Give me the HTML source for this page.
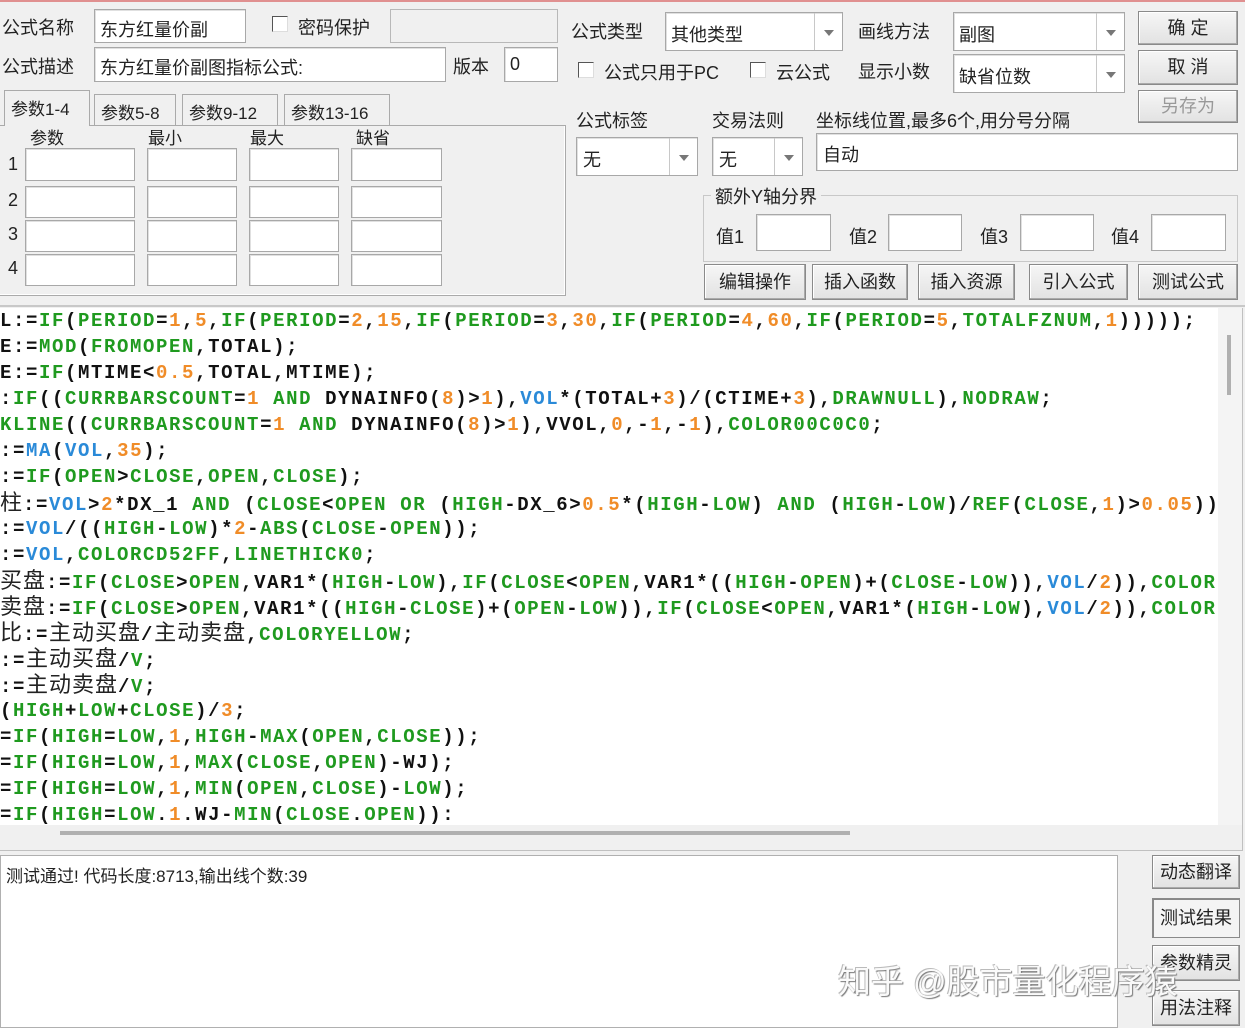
<!DOCTYPE html>
<html><head><meta charset="utf-8"><style>
*{margin:0;padding:0;box-sizing:border-box}
body{width:1245px;height:1028px;background:#f0f0f0;position:relative;overflow:hidden;font-family:"Liberation Sans","Noto Sans CJK SC",sans-serif;font-size:18px;color:#222}
.a{position:absolute;white-space:nowrap}
.in{position:absolute;background:#fff;border:1px solid #a8a8a8;box-shadow:inset 1px 1px 0 #e0e0e0}
.cb{position:absolute;width:16px;height:16px;background:#fff;border:1px solid #555;border-right-color:#ddd;border-bottom-color:#ddd}
.btn{position:absolute;background:linear-gradient(#f6f6f6,#e2e2e2);border:1px solid #8a8a8a;box-shadow:inset -1px -1px 0 #aaa,inset 1px 1px 0 #fff;text-align:center;font-size:18px}
.dd{position:absolute;top:0;bottom:0;width:28px;right:0;border-left:1px solid #c8c8c8}
.dd:after{content:"";position:absolute;left:9px;top:50%;margin-top:-2px;border:5px solid transparent;border-top:6px solid #777;border-bottom:0}
.tab{position:absolute;top:94px;height:31px;border:1px solid #aaa;border-bottom:0;padding:4px 6px;font-size:17px;background:#f0f0f0}
#code{position:absolute;left:0;top:308px;width:1218px;height:517px;background:#fff;overflow:hidden;font-family:"Liberation Mono",monospace;font-weight:bold;font-size:19px;letter-spacing:1.6px;color:#111}
#code div{height:26px;line-height:26px;white-space:pre;overflow:hidden}
g{color:#1f9a1f}o{color:#f08c28}u{color:#2a8ad8;text-decoration:none}
c{font-family:"Noto Sans CJK SC",sans-serif;font-weight:normal;font-size:22px;letter-spacing:1px;color:#222;line-height:1}
</style></head><body>
<div class="a" style="left:0;top:0;width:1245px;height:2px;background:#e09090"></div>

<div class="a" style="left:2px;top:14px">公式名称</div>
<div class="in" style="left:94px;top:9px;width:152px;height:34px"><span class="a" style="left:5px;top:6px">东方红量价副</span></div>
<div class="cb" style="left:272px;top:16px"></div>
<div class="a" style="left:298px;top:14px">密码保护</div>
<div class="a" style="left:390px;top:9px;width:168px;height:34px;border:1px solid #b8b8b8"></div>

<div class="a" style="left:2px;top:53px">公式描述</div>
<div class="in" style="left:94px;top:47px;width:352px;height:35px"><span class="a" style="left:5px;top:6px">东方红量价副图指标公式:</span></div>
<div class="a" style="left:453px;top:53px">版本</div>
<div class="in" style="left:504px;top:47px;width:54px;height:35px"><span class="a" style="left:5px;top:6px">0</span></div>

<div class="a" style="left:0;top:125px;width:566px;height:171px;border:1px solid #aaa;border-left:0;box-shadow:inset -1px -1px 0 #fff"></div>
<div class="tab" style="left:4px;top:90px;height:36px;width:86px;z-index:2">参数1-4</div>
<div class="tab" style="left:94px;width:82px">参数5-8</div>
<div class="tab" style="left:182px;width:96px">参数9-12</div>
<div class="tab" style="left:284px;width:106px">参数13-16</div>
<div class="a" style="left:30px;top:124px;font-size:17px">参数</div>
<div class="a" style="left:148px;top:124px;font-size:17px">最小</div>
<div class="a" style="left:250px;top:124px;font-size:17px">最大</div>
<div class="a" style="left:356px;top:124px;font-size:17px">缺省</div>
<div class="a" style="left:8px;top:154px">1</div><div class="a" style="left:8px;top:190px">2</div><div class="a" style="left:8px;top:224px">3</div><div class="a" style="left:8px;top:258px">4</div>
<div class="in" style="left:25px;top:148px;width:110px;height:33px"></div><div class="in" style="left:147px;top:148px;width:90px;height:33px"></div><div class="in" style="left:249px;top:148px;width:90px;height:33px"></div><div class="in" style="left:351px;top:148px;width:91px;height:33px"></div>
<div class="in" style="left:25px;top:186px;width:110px;height:32px"></div><div class="in" style="left:147px;top:186px;width:90px;height:32px"></div><div class="in" style="left:249px;top:186px;width:90px;height:32px"></div><div class="in" style="left:351px;top:186px;width:91px;height:32px"></div>
<div class="in" style="left:25px;top:220px;width:110px;height:32px"></div><div class="in" style="left:147px;top:220px;width:90px;height:32px"></div><div class="in" style="left:249px;top:220px;width:90px;height:32px"></div><div class="in" style="left:351px;top:220px;width:91px;height:32px"></div>
<div class="in" style="left:25px;top:254px;width:110px;height:32px"></div><div class="in" style="left:147px;top:254px;width:90px;height:32px"></div><div class="in" style="left:249px;top:254px;width:90px;height:32px"></div><div class="in" style="left:351px;top:254px;width:91px;height:32px"></div>

<div class="a" style="left:571px;top:18px">公式类型</div>
<div class="in" style="left:665px;top:12px;width:178px;height:39px"><span class="a" style="left:5px;top:8px">其他类型</span><div class="dd"></div></div>
<div class="a" style="left:858px;top:18px">画线方法</div>
<div class="in" style="left:953px;top:12px;width:172px;height:39px"><span class="a" style="left:5px;top:8px">副图</span><div class="dd"></div></div>
<div class="btn" style="left:1138px;top:11px;width:100px;height:34px;line-height:32px">确 定</div>
<div class="btn" style="left:1138px;top:50px;width:100px;height:35px;line-height:33px">取 消</div>
<div class="btn" style="left:1138px;top:90px;width:100px;height:33px;line-height:31px;color:#999">另存为</div>

<div class="cb" style="left:578px;top:62px"></div><div class="a" style="left:604px;top:59px">公式只用于PC</div>
<div class="cb" style="left:750px;top:62px"></div><div class="a" style="left:776px;top:59px">云公式</div>
<div class="a" style="left:858px;top:58px">显示小数</div>
<div class="in" style="left:953px;top:54px;width:172px;height:39px"><span class="a" style="left:5px;top:8px">缺省位数</span><div class="dd"></div></div>

<div class="a" style="left:576px;top:107px">公式标签</div>
<div class="a" style="left:712px;top:107px">交易法则</div>
<div class="a" style="left:816px;top:107px">坐标线位置,最多6个,用分号分隔</div>
<div class="in" style="left:576px;top:137px;width:122px;height:39px"><span class="a" style="left:6px;top:8px">无</span><div class="dd"></div></div>
<div class="in" style="left:712px;top:137px;width:91px;height:39px"><span class="a" style="left:6px;top:8px">无</span><div class="dd"></div></div>
<div class="in" style="left:816px;top:133px;width:422px;height:38px"><span class="a" style="left:6px;top:7px">自动</span></div>

<div class="a" style="left:703px;top:195px;width:535px;height:67px;border:1px solid #c8c8c8"></div>
<div class="a" style="left:711px;top:183px;background:#f0f0f0;padding:0 4px">额外Y轴分界</div>
<div class="a" style="left:716px;top:223px">值1</div><div class="in" style="left:756px;top:214px;width:75px;height:37px"></div>
<div class="a" style="left:849px;top:223px">值2</div><div class="in" style="left:888px;top:214px;width:74px;height:37px"></div>
<div class="a" style="left:980px;top:223px">值3</div><div class="in" style="left:1020px;top:214px;width:74px;height:37px"></div>
<div class="a" style="left:1111px;top:223px">值4</div><div class="in" style="left:1151px;top:214px;width:75px;height:37px"></div>

<div class="btn" style="left:704px;top:264px;width:102px;height:36px;line-height:34px">编辑操作</div>
<div class="btn" style="left:812px;top:264px;width:96px;height:36px;line-height:34px">插入函数</div>
<div class="btn" style="left:918px;top:264px;width:97px;height:36px;line-height:34px">插入资源</div>
<div class="btn" style="left:1029px;top:264px;width:99px;height:36px;line-height:34px">引入公式</div>
<div class="btn" style="left:1138px;top:264px;width:100px;height:36px;line-height:34px">测试公式</div>

<div class="a" style="left:0;top:305px;width:1245px;height:2px;background:#c8c8c8"></div>

<div id="code"><div>L:=<g>IF</g>(<g>PERIOD</g>=<o>1</o>,<o>5</o>,<g>IF</g>(<g>PERIOD</g>=<o>2</o>,<o>15</o>,<g>IF</g>(<g>PERIOD</g>=<o>3</o>,<o>30</o>,<g>IF</g>(<g>PERIOD</g>=<o>4</o>,<o>60</o>,<g>IF</g>(<g>PERIOD</g>=<o>5</o>,<g>TOTALFZNUM</g>,<o>1</o>)))));</div><div>E:=<g>MOD</g>(<g>FROMOPEN</g>,TOTAL);</div><div>E:=<g>IF</g>(MTIME&lt;<o>0.5</o>,TOTAL,MTIME);</div><div>:<g>IF</g>((<g>CURRBARSCOUNT</g>=<o>1</o> <g>AND</g> DYNAINFO(<o>8</o>)&gt;<o>1</o>),<u>VOL</u>*(TOTAL+<o>3</o>)/(CTIME+<o>3</o>),<g>DRAWNULL</g>),<g>NODRAW</g>;</div><div><g>KLINE</g>((<g>CURRBARSCOUNT</g>=<o>1</o> <g>AND</g> DYNAINFO(<o>8</o>)&gt;<o>1</o>),VVOL,<o>0</o>,-<o>1</o>,-<o>1</o>),<g>COLOR00C0C0</g>;</div><div>:=<u>MA</u>(<u>VOL</u>,<o>35</o>);</div><div>:=<g>IF</g>(<g>OPEN</g>&gt;<g>CLOSE</g>,<g>OPEN</g>,<g>CLOSE</g>);</div><div><c>柱</c>:=<u>VOL</u>&gt;<o>2</o>*DX_1 <g>AND</g> (<g>CLOSE</g>&lt;<g>OPEN</g> <g>OR</g> (<g>HIGH</g>-DX_6&gt;<o>0.5</o>*(<g>HIGH</g>-<g>LOW</g>) <g>AND</g> (<g>HIGH</g>-<g>LOW</g>)/<g>REF</g>(<g>CLOSE</g>,<o>1</o>)&gt;<o>0.05</o>));</div><div>:=<u>VOL</u>/((<g>HIGH</g>-<g>LOW</g>)*<o>2</o>-<g>ABS</g>(<g>CLOSE</g>-<g>OPEN</g>));</div><div>:=<u>VOL</u>,<g>COLORCD52FF</g>,<g>LINETHICK0</g>;</div><div><c>买盘</c>:=<g>IF</g>(<g>CLOSE</g>&gt;<g>OPEN</g>,VAR1*(<g>HIGH</g>-<g>LOW</g>),<g>IF</g>(<g>CLOSE</g>&lt;<g>OPEN</g>,VAR1*((<g>HIGH</g>-<g>OPEN</g>)+(<g>CLOSE</g>-<g>LOW</g>)),<u>VOL</u>/<o>2</o>)),<g>COLOR</g></div><div><c>卖盘</c>:=<g>IF</g>(<g>CLOSE</g>&gt;<g>OPEN</g>,VAR1*((<g>HIGH</g>-<g>CLOSE</g>)+(<g>OPEN</g>-<g>LOW</g>)),<g>IF</g>(<g>CLOSE</g>&lt;<g>OPEN</g>,VAR1*(<g>HIGH</g>-<g>LOW</g>),<u>VOL</u>/<o>2</o>)),<g>COLOR</g></div><div><c>比</c>:=<c>主动买盘</c>/<c>主动卖盘</c>,<g>COLORYELLOW</g>;</div><div>:=<c>主动买盘</c>/<g>V</g>;</div><div>:=<c>主动卖盘</c>/<g>V</g>;</div><div>(<g>HIGH</g>+<g>LOW</g>+<g>CLOSE</g>)/<o>3</o>;</div><div>=<g>IF</g>(<g>HIGH</g>=<g>LOW</g>,<o>1</o>,<g>HIGH</g>-<g>MAX</g>(<g>OPEN</g>,<g>CLOSE</g>));</div><div>=<g>IF</g>(<g>HIGH</g>=<g>LOW</g>,<o>1</o>,<g>MAX</g>(<g>CLOSE</g>,<g>OPEN</g>)-WJ);</div><div>=<g>IF</g>(<g>HIGH</g>=<g>LOW</g>,<o>1</o>,<g>MIN</g>(<g>OPEN</g>,<g>CLOSE</g>)-<g>LOW</g>);</div><div>=<g>IF</g>(<g>HIGH</g>=<g>LOW</g>.<o>1</o>.WJ-<g>MIN</g>(<g>CLOSE</g>.<g>OPEN</g>)):</div></div>

<div class="a" style="left:1218px;top:308px;width:24px;height:517px;background:#f4f4f4"></div>
<div class="a" style="left:1227px;top:335px;width:4px;height:60px;background:#b0b0b0"></div>
<div class="a" style="left:0;top:825px;width:1242px;height:26px;background:#f0f0f0;border-bottom:1px solid #c0c0c0"></div>
<div class="a" style="left:60px;top:831px;width:790px;height:4px;background:#b0b0b0"></div>
<div class="a" style="left:1242px;top:308px;width:1px;height:543px;background:#c0c0c0"></div>

<div class="a" style="left:0;top:855px;width:1118px;height:173px;background:#fff;border:1px solid #b0b0b0"></div>
<div class="a" style="left:6px;top:862px;font-size:17px">测试通过! 代码长度:8713,输出线个数:39</div>
<div class="btn" style="left:1152px;top:855px;width:88px;height:34px;line-height:32px">动态翻译</div>
<div class="btn" style="left:1152px;top:898px;width:88px;height:40px;line-height:38px;background:#f4f4f4;box-shadow:inset 1px 1px 0 #888">测试结果</div>
<div class="btn" style="left:1152px;top:945px;width:88px;height:36px;line-height:34px">参数精灵</div>
<div class="btn" style="left:1152px;top:990px;width:88px;height:36px;line-height:34px">用法注释</div>
<div class="a" style="left:838px;top:955px;font-size:33px;color:#fafafa;text-shadow:1px 1px 1px #777,-1px -1px 0 #bbb">知乎 @股市量化程序猿</div>
</body></html>
